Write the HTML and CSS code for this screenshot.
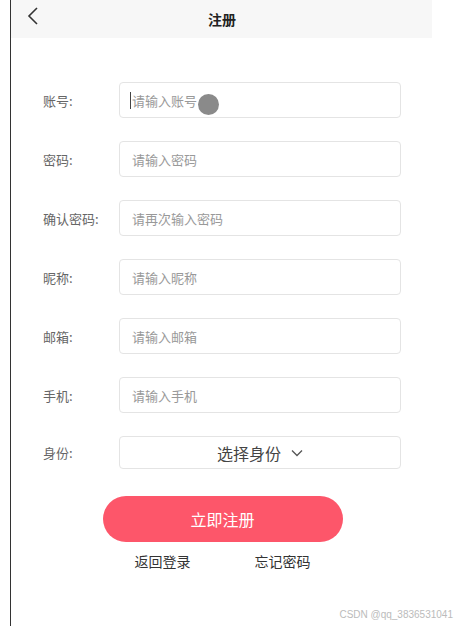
FILE: index.html
```html
<!DOCTYPE html>
<html lang="zh-CN">
<head>
    <meta charset="UTF-8">
    <meta name="viewport" content="width=device-width, initial-scale=1.0">
    <title>注册</title>
    <link rel="stylesheet" href="styles.css">
</head>
<body>
    <div class="page">
        <div class="header">
            <svg class="back" width="12" height="18" viewBox="0 0 12 18">
                <path d="M10 1 L2 9 L10 17" fill="none" stroke="#333" stroke-width="1.6"/>
            </svg>
            <div class="title">注册</div>
        </div>

        <div class="form">
            <div class="row">
                <label>账号:</label>
                <div class="field">
                    <input type="text" placeholder="请输入账号">
                    <span class="caret"></span>
                    <span class="touch"></span>
                </div>
            </div>
            <div class="row">
                <label>密码:</label>
                <div class="field"><input type="password" placeholder="请输入密码"></div>
            </div>
            <div class="row">
                <label>确认密码:</label>
                <div class="field"><input type="password" placeholder="请再次输入密码"></div>
            </div>
            <div class="row">
                <label>昵称:</label>
                <div class="field"><input type="text" placeholder="请输入昵称"></div>
            </div>
            <div class="row">
                <label>邮箱:</label>
                <div class="field"><input type="text" placeholder="请输入邮箱"></div>
            </div>
            <div class="row">
                <label>手机:</label>
                <div class="field"><input type="text" placeholder="请输入手机"></div>
            </div>
            <div class="row select-row">
                <label>身份:</label>
                <div class="select">
                    <span>选择身份</span>
                    <svg width="12" height="8" viewBox="0 0 12 8">
                        <path d="M1 1.5 L6 6.5 L11 1.5" fill="none" stroke="#555" stroke-width="1.3"/>
                    </svg>
                </div>
            </div>

            <div class="submit-button">立即注册</div>

            <div class="links">
                <span>返回登录</span>
                <span>忘记密码</span>
            </div>
        </div>
    </div>

    <div class="watermark">CSDN @qq_3836531041</div>
</body>
</html>
```

FILE: styles.css
```css
html, body {
    margin: 0;
    padding: 0;
    background-color: #ffffff;
}

body {
    font-family: "Noto Sans CJK SC", "Noto Sans", sans-serif;
    padding-left: 10px;
    position: relative;
    min-height: 626px;
}

.page {
    width: 421px;
    min-height: 626px;
    border-left: 1.5px solid #333;
}

.header {
    height: 38px;
    background-color: #f7f7f7;
    display: flex;
    align-items: center;
    justify-content: center;
    position: relative;
}

.back {
    position: absolute;
    left: 16px;
    top: 7px;
}

.title {
    font-size: 14px;
    font-weight: bold;
    color: #222;
    margin-left: 1px;
}

.form {
    padding-top: 44px;
}

.row {
    display: flex;
    align-items: center;
    height: 36px;
    margin-bottom: 23px;
}

.row label {
    flex-shrink: 0;
    width: 108px;
    padding-left: 32px;
    box-sizing: border-box;
    font-size: 13px;
    color: #666;
    white-space: nowrap;
}

.field {
    position: relative;
    width: 282px;
    height: 36px;
}

.field input {
    width: 100%;
    height: 100%;
    box-sizing: border-box;
    border: 1px solid #e4e4e4;
    border-radius: 4px;
    padding: 0 12px;
    font-family: inherit;
    font-size: 13px;
    color: #333;
    outline: none;
}

.field input::placeholder {
    color: #999;
}

.caret {
    position: absolute;
    left: 11px;
    top: 10px;
    width: 1px;
    height: 17px;
    background-color: #444;
}

.touch {
    position: absolute;
    left: 79px;
    top: 12px;
    width: 21px;
    height: 21px;
    border-radius: 50%;
    background-color: #8a8a8a;
}

.select-row {
    height: 33px;
    margin-top: 1px;
    margin-bottom: 27px;
}

.select {
    width: 282px;
    height: 33px;
    box-sizing: border-box;
    border: 1px solid #e4e4e4;
    border-radius: 4px;
    display: flex;
    align-items: center;
    justify-content: center;
    gap: 10px;
    font-size: 16px;
    color: #444;
}

.select svg {
    margin-top: 1px;
}

.submit-button {
    width: 240px;
    height: 46px;
    margin: 0 auto;
    border-radius: 23px;
    background-color: #fd566a;
    color: #ffffff;
    font-size: 16px;
    display: flex;
    align-items: center;
    justify-content: center;
    position: relative;
    left: 1px;
}

.links {
    display: flex;
    justify-content: center;
    gap: 64px;
    margin-top: 9px;
    font-size: 14px;
    color: #333;
    position: relative;
    left: 1px;
}

.watermark {
    position: absolute;
    right: 4px;
    bottom: 6px;
    font-family: "Liberation Sans", Arial, sans-serif;
    font-size: 10px;
    color: #bbb;
}
```
